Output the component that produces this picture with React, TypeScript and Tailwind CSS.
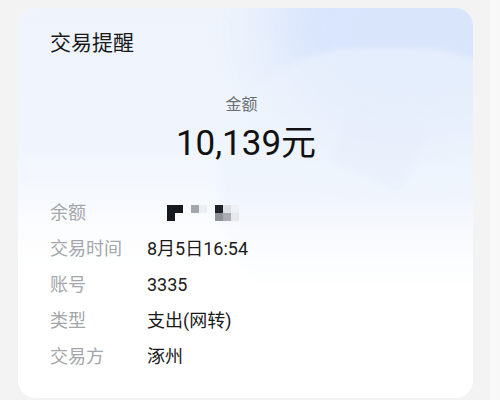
import React from "react";

const rows: Array<{ label: string; value?: string }> = [
  { label: "余额" },
  { label: "交易时间", value: "8月5日16:54" },
  { label: "账号", value: "3335" },
  { label: "类型", value: "支出(网转)" },
  { label: "交易方", value: "涿州" },
];

// pixelated mosaic hiding the balance, 8px cells
const mosaic = [
  "#16191f", "#16191f", "", "#a2a6ad", "#eceef2", "", "#1f2229", "#dde0e5", "#eef0f3", "",
  "#16191f", "", "", "", "", "", "#8d9198", "#a9adb3", "#e6e8ec", "",
];

function Masked() {
  return (
    <div className="ml-[20px] grid grid-cols-[repeat(10,8px)] grid-rows-[8px_8px]">
      {mosaic.map((c, i) => (
        <div key={i} style={{ backgroundColor: c || "transparent" }} />
      ))}
    </div>
  );
}

export default function App() {
  return (
    <div
      className="flex h-[400px] w-[500px] bg-[#f3f3f4]"
      style={{ fontFamily: 'Roboto, "Noto Sans CJK SC", sans-serif' }}
    >
      <div className="flex-1 pl-[18px] pt-[8px] pr-[17px] pb-[2px]">
        <div className="relative h-full overflow-hidden rounded-[18px] bg-white">
          {/* soft blue background decoration */}
          <div className="absolute inset-x-0 top-0 h-[270px] bg-gradient-to-b from-[#eef3fc] via-[#f0f5fd] to-white" />
          <div className="absolute right-[-80px] top-[-90px] h-[220px] w-[280px] rounded-full bg-[#d2e1fb] opacity-80 blur-[30px]" />
          <div className="absolute left-[200px] top-[40px] h-[280px] w-[340px] rounded-full bg-[#eef4fd] opacity-60 blur-[3px]" />
          <div className="absolute left-[320px] top-[100px] h-[72px] w-[82px] rotate-[24deg] rounded-[8px] bg-[#e7eefb] opacity-40 blur-[2px]" />
          <div className="absolute inset-x-0 bottom-0 top-[190px] bg-gradient-to-b from-transparent via-white via-45% to-white" />

          <div className="relative flex flex-col">
            <div className="pl-[32px] pt-[20px] text-[21px] leading-[30px] text-[#181818]">交易提醒</div>
            <div className="mt-[36px] flex flex-col items-center">
              <div className="pr-[8px] text-[16px] leading-[22px] text-[#6b6f75]">金额</div>
              <div className="mt-[6px] pl-[1px] text-[35px] leading-[44px] text-[#111]">10,139元</div>
            </div>
            <div className="mt-[34px] flex flex-col gap-[11px] pl-[32px]">
              {rows.map((r) => (
                <div key={r.label} className="flex h-[25px] items-center text-[18px]">
                  <div className="w-[97px] text-[#a3a6ab]">{r.label}</div>
                  {r.value ? <div className="text-[#1a1a1a]">{r.value}</div> : <Masked />}
                </div>
              ))}
            </div>
          </div>
        </div>
      </div>
      <div className="w-[10px] bg-[#f8f8f9]" />
    </div>
  );
}
